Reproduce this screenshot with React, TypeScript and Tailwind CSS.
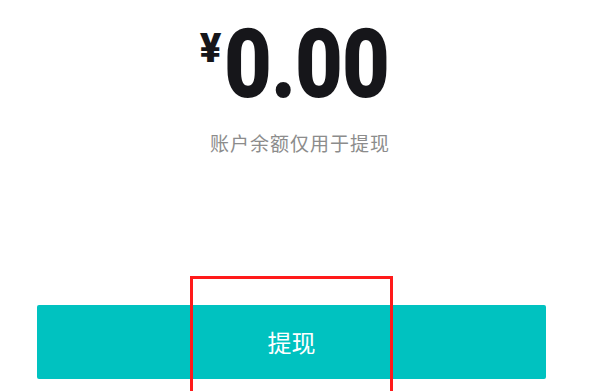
export default function App() {
  return (
    <div className="relative h-[391px] w-[600px] overflow-hidden bg-white font-['Noto_Sans_CJK_SC',sans-serif]">
      <div className="flex flex-col items-center pt-[16px]">
        <div className="flex h-[100px] items-start text-[#16161a] font-['Roboto',sans-serif]">
          <span className="mt-[13px] mr-[3px] text-[40px] font-black leading-none">¥</span>
          <span className="origin-left -mr-[16px] scale-x-[0.86] text-[96px] font-black leading-none tracking-[-1px]">
            0.00
          </span>
        </div>
        <p className="mt-[17px] text-[19px] leading-none tracking-[1px] text-[#8c8c8c]">
          账户余额仅用于提现
        </p>
      </div>

      <div className="mt-[153px] px-[37px]">
        <button className="flex h-[74px] w-[509px] items-center justify-center rounded-[2px] bg-[#00c2c0] text-[24px] font-normal text-white">
          提现
        </button>
      </div>

      {/* annotation box */}
      <div className="absolute left-[190px] top-[276px] h-[130px] w-[203px] border-[3px] border-[#ff1a1a]" />
    </div>
  );
}
